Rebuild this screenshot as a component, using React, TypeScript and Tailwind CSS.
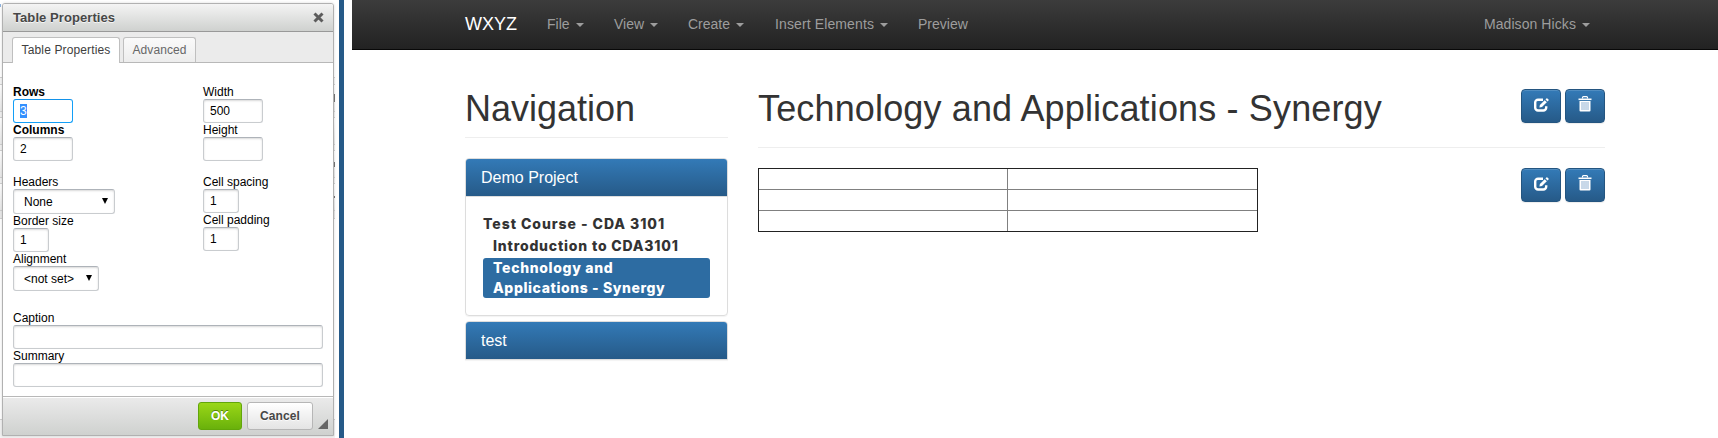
import type { ReactNode } from 'react'

const sans = "font-['Liberation_Sans',Arial,sans-serif]"

function Caret() {
  return <span className="ml-[6px] inline-block border-x-4 border-t-4 border-x-transparent border-t-[#9d9d9d] align-middle" />
}

function Field({ label, w, value, bold, focus }: { label: string; w: string; value?: ReactNode; bold?: boolean; focus?: boolean }) {
  return (
    <div>
      <div className={`h-[14px] whitespace-nowrap leading-[14px] text-black ${bold ? 'font-bold' : ''}`}>{label}</div>
      <div className={`${w} flex h-6 items-center rounded-[3px] border bg-white px-[6px] text-black ${focus ? 'border-[#139ff7] border-t-[#1392e9]' : 'border-[#c9cccf] border-t-[#aeb3b9] shadow-[inset_0_1px_2px_rgba(0,0,0,0.15)]'}`}>
        {value}
      </div>
    </div>
  )
}

function Select({ label, w, value }: { label: string; w: string; value: string }) {
  return (
    <div>
      <div className="h-[14px] whitespace-nowrap leading-[14px] text-black">{label}</div>
      <div className={`${w} flex h-[25px] items-center justify-between rounded-[3px] border border-[#c9cccf] border-t-[#aeb3b9] bg-white pl-[10px] pr-[6px] text-black shadow-[inset_0_1px_2px_rgba(0,0,0,0.15)]`}>
        <span>{value}</span>
        <span className="-mt-[2px] border-x-[3px] border-t-[6px] border-x-transparent border-t-black" />
      </div>
    </div>
  )
}

function EditIcon() {
  return (
    <svg width="15" height="14" viewBox="0 0 15 14" fill="none">
      <path d="M9 1.7H4A2.8 2.8 0 0 0 1.2 4.5v5.2A2.8 2.8 0 0 0 4 12.5h5.4a2.8 2.8 0 0 0 2.8-2.8V8.2" stroke="#fff" strokeWidth="2.4" />
      <path d="M5.4 9.6l.5-2.6 4.8-4.8 2.1 2.1-4.8 4.8z" fill="#fff" />
      <path d="M11.5 1.4l.9-.9a.7.7 0 0 1 1 0l1.1 1.1a.7.7 0 0 1 0 1l-.9.9z" fill="#fff" />
    </svg>
  )
}

function TrashIcon() {
  return (
    <svg width="14" height="16" viewBox="0 0 14 16" fill="none">
      <path d="M4.5 2.5v-1a.9.9 0 0 1 .9-.9h3.2a.9.9 0 0 1 .9.9v1" stroke="#fff" strokeWidth="1.2" />
      <path d="M0.5 2.5h13v1.6H0.5z" fill="#fff" />
      <path d="M1.5 5h11v9.6a1 1 0 0 1-1 1h-9a1 1 0 0 1-1-1z" fill="#fff" />
      <path d="M4 6v8M6 6v8M8 6v8M10 6v8" stroke="#76a0c6" strokeWidth="0.8" />
    </svg>
  )
}

function IconButton({ children }: { children: ReactNode }) {
  return (
    <button className="flex h-[34px] w-10 justify-center rounded-[4px] border border-[#245580] bg-linear-to-b from-[#337ab7] to-[#265a88] shadow-[inset_0_1px_0_rgba(255,255,255,0.15),0_1px_1px_rgba(0,0,0,0.075)]">
      {children}
    </button>
  )
}

function Actions() {
  return (
    <div className="flex gap-1">
      <IconButton><span className="mt-[8px]"><EditIcon /></span></IconButton>
      <IconButton><span className="mt-[6px]"><TrashIcon /></span></IconButton>
    </div>
  )
}

function ToolbarRow({ h, mark }: { h: string; mark?: string }) {
  return (
    <div className={`${h} flex shrink-0 items-center justify-end border-y border-[#d0d0d0] bg-linear-to-b from-white to-[#e8e8e8]`}>
      {mark && <span className={`${mark} w-px bg-[#777]`} />}
    </div>
  )
}

function Dialog() {
  return (
    <div className="absolute left-[2px] top-[3px] flex h-[433px] w-[332px] flex-col rounded-t-[3px] border border-[#b1b1b1] bg-white text-[12px] text-black shadow-[0_0_3px_rgba(0,0,0,0.15)]">
      <div className="flex h-[28px] shrink-0 items-center justify-between rounded-t-[2px] border-b border-[#999] bg-linear-to-b from-[#f4f4f4] to-[#cfd1cf] pl-[10px] pr-[9px]">
        <span className="text-[13px] font-bold tracking-[0.08px] text-[#474747] [text-shadow:0_1px_0_rgba(255,255,255,0.75)]">Table Properties</span>
        <svg width="11" height="11" viewBox="0 0 11 11"><path d="M1.5 1.5l8 8M9.5 1.5l-8 8" stroke="#5c5c5c" strokeWidth="3" /></svg>
      </div>
      <div className="flex h-[31px] shrink-0 items-end border-b border-[#b8b8b8] bg-[#ebebeb] pl-[9px]">
        <div className="-mb-px mr-[3px] flex h-[26px] w-[108px] items-center justify-center whitespace-nowrap rounded-t-[3px] border border-b-0 border-[#bfbfbf] bg-white pb-[2px] tracking-[0.13px] text-[#404040]">Table Properties</div>
        <div className="flex h-[25px] w-[73px] items-center justify-center rounded-t-[3px] border border-b-0 border-[#bfbfbf] bg-linear-to-b from-[#fafafa] to-[#ededed] tracking-[0.1px] text-[#676767]">Advanced</div>
      </div>
      <div className="flex grow flex-col pl-[10px] pt-[22px]">
        <div className="flex">
          <div className="w-[190px]">
            <Field label="Rows" w="w-[60px]" bold focus value={<span className="bg-[#3390ff] leading-[14px] text-white">3</span>} />
            <Field label="Columns" w="w-[60px]" bold value="2" />
            <div className="h-[14px]" />
            <Select label="Headers" w="w-[102px]" value="None" />
            <Field label="Border size" w="w-9" value="1" />
            <Select label="Alignment" w="w-[86px]" value="<not set>" />
          </div>
          <div>
            <Field label="Width" w="w-[60px]" value="500" />
            <Field label="Height" w="w-[60px]" />
            <div className="h-[14px]" />
            <Field label="Cell spacing" w="w-9" value="1" />
            <Field label="Cell padding" w="w-9" value="1" />
          </div>
        </div>
        <div className="h-5" />
        <Field label="Caption" w="w-[310px]" />
        <Field label="Summary" w="w-[310px]" />
      </div>
      <div className="flex h-[39px] shrink-0 border-t border-[#b8b8b8] bg-linear-to-b from-[#ebebeb] to-[#cfd1cf] pt-[5px] shadow-[inset_0_1px_0_#fff]">
        <button className="ml-[195px] h-7 w-11 rounded-[3px] border border-[#62a60a] bg-linear-to-b from-[#9ad717] to-[#69b10b] font-bold text-white [text-shadow:0_-1px_0_#55830c]">OK</button>
        <button className="ml-[5px] h-7 w-[66px] rounded-[3px] border border-[#b6b6b6] bg-linear-to-b from-white to-[#e4e4e4] font-bold tracking-[0.1px] text-[#474747] [text-shadow:0_1px_0_rgba(255,255,255,0.75)]">Cancel</button>
        <svg className="ml-[5px] mt-[17px]" width="10" height="10" viewBox="0 0 10 10"><path d="M10 0v10H0z" fill="#666" /></svg>
      </div>
    </div>
  )
}

function PanelHead({ children }: { children: ReactNode }) {
  return <div className="flex h-[37px] items-center rounded-t-[3px] bg-linear-to-b from-[#337ab7] to-[#265a88] pl-[15px] text-[16px] text-white">{children}</div>
}

const black = "font-['Inter','Liberation_Sans',sans-serif] font-extrabold text-[14px] leading-[20px] whitespace-nowrap"

export default function App() {
  return (
    <div className={`${sans} flex h-[438px] w-[1718px] overflow-hidden bg-white`}>
      <div className="relative w-[339px] shrink-0 bg-white">
        <div className="flex h-full w-[335px] flex-col">
          <div className="mt-1 h-[3px] w-px shrink-0 bg-[#8fb4e0]" />
          <div className="h-[70px] shrink-0" />
          <div className="h-[7px] shrink-0 border-t border-[#d0d0d0] bg-[#f4f4f4]" />
          <ToolbarRow h="h-[28px]" mark="h-2" />
          <div className="h-[5px] shrink-0 bg-[#f0f0f0]" />
          <ToolbarRow h="h-[28px]" />
          <div className="h-[5px] shrink-0 bg-[#f0f0f0]" />
          <ToolbarRow h="h-[28px]" mark="h-[5px]" />
          <div className="h-[5px] shrink-0 bg-[#f0f0f0]" />
          <ToolbarRow h="h-[28px]" mark="h-[2px]" />
          <div className="h-[8px] shrink-0 border-b border-[#d0d0d0] bg-[#e8e8e8]" />
          <div className="h-[200px] shrink-0" />
          <div className="grow border-t border-[#d0d0d0] bg-[#f2f2f2]" />
        </div>
        <Dialog />
      </div>
      <div className="w-[5px] shrink-0 bg-[#265a88]" />
      <div className="w-2 shrink-0" />
      <div className="flex w-[1366px] shrink-0 flex-col">
        <nav className="flex h-[50px] shrink-0 items-center border-b border-[#080808] bg-linear-to-b from-[#3c3c3c] to-[#222] pl-[113px] pr-[128px] text-[14px] text-[#9d9d9d]">
          <span className="w-[82px] text-[18px] text-white">WXYZ</span>
          <span className="w-[67px]">File<Caret /></span>
          <span className="w-[74px]">View<Caret /></span>
          <span className="w-[87px]">Create<Caret /></span>
          <span className="w-[143px] tracking-[0.12px]">Insert Elements<Caret /></span>
          <span>Preview</span>
          <span className="ml-auto tracking-[0.08px]">Madison Hicks<Caret /></span>
        </nav>
        <div className="flex pl-[113px]">
          <div className="w-[263px]">
            <h1 className="mt-[38px] h-[50px] border-b border-[#eee] pt-px text-[36px] leading-[40px] text-[#333]">Navigation</h1>
            <div className="mt-5 h-[158px] rounded-[4px] border border-[#ddd] shadow-[0_1px_1px_rgba(0,0,0,0.05)]">
              <PanelHead>Demo Project</PanelHead>
              <div className="border-t border-[#ddd] px-[17px] pt-[17px] text-[#333]">
                <div className={`${black} h-[22px] tracking-[0.95px]`}>Test Course - CDA 3101</div>
                <div className={`${black} h-[22px] pl-[10px] tracking-[0.8px]`}>Introduction to CDA3101</div>
                <div className={`${black} rounded-[3px] bg-[#2d6ca2] pl-[10px] text-white`}>
                  <div className="tracking-[0.67px]">Technology and</div>
                  <div className="tracking-[0.6px]">Applications - Synergy</div>
                </div>
              </div>
            </div>
            <div className="mt-[5px] rounded-t-[4px] border border-[#ddd] shadow-[0_1px_1px_rgba(0,0,0,0.05)]">
              <PanelHead>test</PanelHead>
            </div>
          </div>
          <div className="ml-[30px] w-[847px]">
            <div className="flex h-[98px] items-start justify-between border-b border-[#eee] pt-[39px]">
              <h1 className="text-[36px] leading-[40px] tracking-[0.15px] text-[#333]">Technology and Applications - Synergy</h1>
              <Actions />
            </div>
            <div className="flex items-start justify-between pt-5">
              <div className="grid h-16 w-[500px] grid-cols-[249px_1fr] grid-rows-[21px_21px_1fr] border border-[#222]">
                <div className="border-r border-b border-[#808080]" />
                <div className="border-b border-[#808080]" />
                <div className="border-r border-b border-[#808080]" />
                <div className="border-b border-[#808080]" />
                <div className="border-r border-[#808080]" />
                <div />
              </div>
              <Actions />
            </div>
          </div>
        </div>
      </div>
    </div>
  )
}
